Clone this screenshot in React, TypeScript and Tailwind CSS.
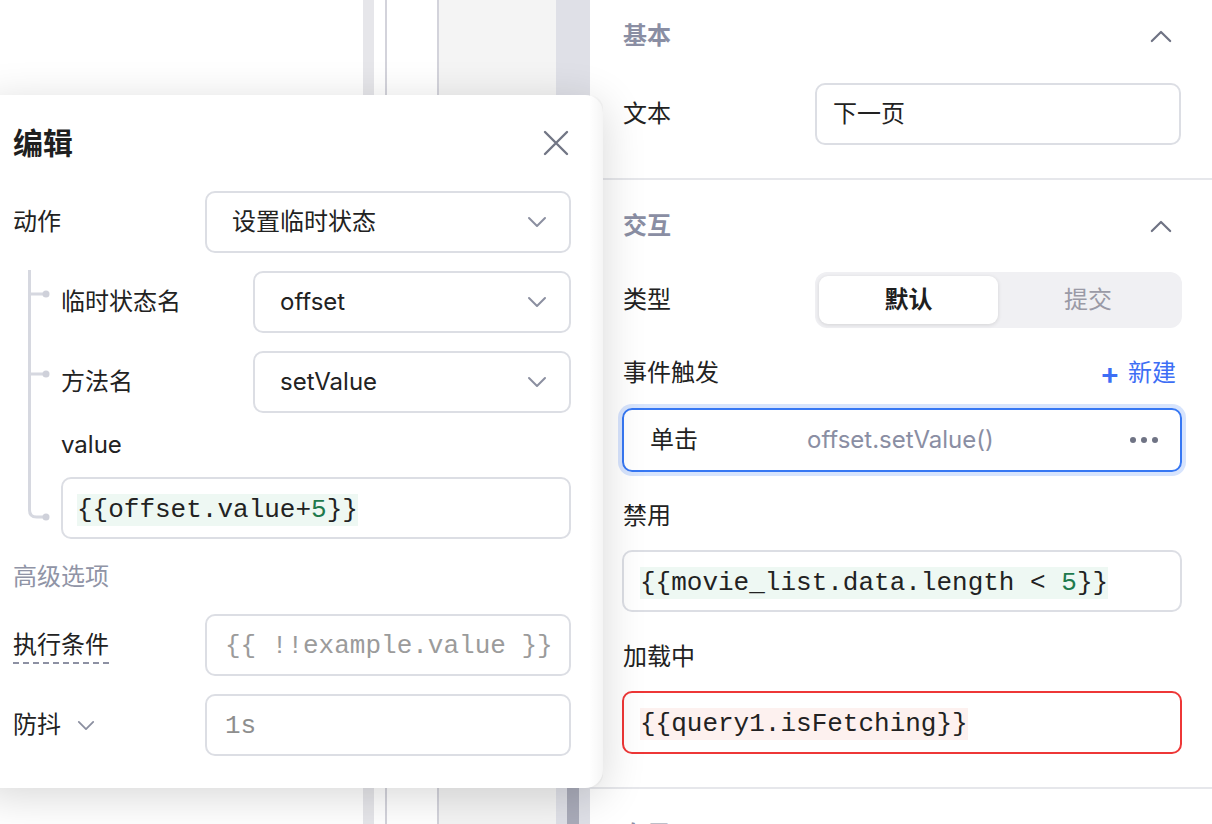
import React from 'react';

// Small drawn icons
const ChevronDown = ({ className }: { className?: string }) => (
  <svg viewBox="0 0 20 12" className={className} fill="none" stroke="currentColor" strokeWidth={2} strokeLinecap="round" strokeLinejoin="round">
    <path d="M2 2l8 8 8-8" />
  </svg>
);

const ChevronUp = ({ className }: { className?: string }) => (
  <svg viewBox="0 0 24 14" className={className} fill="none" stroke="currentColor" strokeWidth={2.4} strokeLinecap="round" strokeLinejoin="round">
    <path d="M2 12l10-10 10 10" />
  </svg>
);

const CloseIcon = () => (
  <svg viewBox="0 0 26 26" className="h-[26px] w-[26px] text-[#727685]" fill="none" stroke="currentColor" strokeWidth={2.4} strokeLinecap="round">
    <path d="M2 2l22 22M24 2L2 24" />
  </svg>
);

const Select = ({ value }: { value: string }) => (
  <div className="flex h-[62px] flex-1 items-center justify-between rounded-[10px] border-2 border-[#dcdee4] bg-white pl-[25px] pr-[22px]">
    <span className="text-[24px] text-[#222]">{value}</span>
    <ChevronDown className="h-[12px] w-[20px] text-[#8b8fa0]" />
  </div>
);

// Background canvas strips on the left
const Canvas = () => (
  <div className="flex h-full w-[590px] shrink-0">
    <div className="w-[363px] bg-white" />
    <div className="w-[11px] bg-[#e6e6ea]" />
    <div className="w-[11px] bg-white" />
    <div className="w-[2px] bg-[#d3d3db]" />
    <div className="w-[50px] bg-white" />
    <div className="w-[2px] bg-[#d3d3db]" />
    <div className="w-[117px] bg-[#f4f4f4]" />
    <div className="flex w-[34px] justify-center bg-[#dfe0e7]">
      <div className="mt-[600px] h-[224px] w-[12px] bg-[#a9abb9]" />
    </div>
  </div>
);

const EditPopup = () => (
  <div className="absolute left-[-20px] top-[95px] z-10 flex h-[693px] w-[623px] flex-col rounded-[18px] bg-white pl-[33px] pr-[32px] shadow-[0_8px_44px_rgba(0,0,0,0.16)]">
    <div className="pointer-events-none absolute bottom-0 right-0 top-0 w-[14px] rounded-r-[18px] bg-gradient-to-r from-transparent to-black/[0.04]" />

    <div className="flex h-[96px] shrink-0 items-center justify-between">
      <span className="text-[30px] font-bold text-[#1f1f1f]">编辑</span>
      <div className="mr-[2px]">
        <CloseIcon />
      </div>
    </div>

    <div className="flex h-[62px] shrink-0 items-center">
      <span className="w-[192px] text-[24px] text-[#222]">动作</span>
      <Select value="设置临时状态" />
    </div>

    {/* nested params with tree guide */}
    <div className="relative mt-[17px] flex h-[269px] shrink-0 flex-col pl-[48px] pt-[1px]">
      <svg className="absolute left-0 top-0 h-[269px] w-[48px]" viewBox="0 0 48 269" fill="none">
        <path d="M16.5 0V240Q16.5 247 23.5 247H31" stroke="#d6d8e0" strokeWidth={3} />
        <path d="M18 24H31M18 104H31" stroke="#d6d8e0" strokeWidth={3} />
        <circle cx="33" cy="24" r="3.5" fill="#cfd1da" />
        <circle cx="33" cy="104" r="3.5" fill="#cfd1da" />
        <circle cx="33" cy="247" r="3.5" fill="#cfd1da" />
      </svg>
      <div className="flex h-[62px] items-center">
        <span className="w-[192px] text-[24px] text-[#222]">临时状态名</span>
        <Select value="offset" />
      </div>
      <div className="mt-[18px] flex h-[62px] items-center">
        <span className="w-[192px] text-[24px] text-[#222]">方法名</span>
        <Select value="setValue" />
      </div>
      <div className="flex h-[64px] items-center text-[24px] text-[#222]">value</div>
      <div className="flex h-[62px] items-center rounded-[10px] border-2 border-[#dcdee4] px-[14px] pt-[3px]">
        <span className="bg-[#eef8f3] font-['Liberation_Mono',monospace] text-[26px] leading-[32px] text-[#222]">
          {'{{offset.value+'}
          <span className="text-[#1e7a4d]">5</span>
          {'}}'}
        </span>
      </div>
    </div>

    <div className="flex h-[75px] shrink-0 items-center text-[24px] text-[#9094a6]">高级选项</div>

    <div className="flex h-[62px] shrink-0 items-center">
      <div className="w-[192px]">
        <span className="border-b-2 border-dashed border-[#8d91a3] pb-[3px] text-[24px] text-[#222]">执行条件</span>
      </div>
      <div className="flex h-[62px] flex-1 items-center rounded-[10px] border-2 border-[#dcdee4] pl-[18px] pt-[3px]">
        <span className="font-['Liberation_Mono',monospace] text-[26px] text-[#9b9b9b]">{'{{ !!example.value }}'}</span>
      </div>
    </div>

    <div className="mt-[18px] flex h-[62px] shrink-0 items-center">
      <div className="flex w-[192px] items-center gap-[16px]">
        <span className="text-[24px] text-[#222]">防抖</span>
        <ChevronDown className="h-[11px] w-[18px] text-[#8b8fa0]" />
      </div>
      <div className="flex h-[62px] flex-1 items-center rounded-[10px] border-2 border-[#dcdee4] pl-[18px] pt-[3px]">
        <span className="font-['Liberation_Mono',monospace] text-[26px] text-[#8e8e8e]">1s</span>
      </div>
    </div>
  </div>
);

const SectionHeader = ({ title }: { title: string }) => (
  <div className="flex h-[92px] shrink-0 items-center justify-between pl-[33px] pr-[40px]">
    <span className="text-[24px] font-semibold text-[#8a8ea3]">{title}</span>
    <ChevronUp className="h-[13px] w-[22px] text-[#6f7384]" />
  </div>
);

const Inspector = () => (
  <div className="flex h-full w-[622px] shrink-0 flex-col bg-white">
    {/* 基本 */}
    <div className="shrink-0 border-b-2 border-[#e6e7eb] pb-[33px]">
      <div className="flex h-[72px] items-center justify-between pl-[33px] pr-[40px]">
        <span className="text-[24px] font-semibold text-[#8a8ea3]">基本</span>
        <ChevronUp className="h-[13px] w-[22px] text-[#6f7384]" />
      </div>
      <div className="mt-[11px] flex h-[62px] items-center pl-[33px] pr-[31px]">
        <span className="w-[192px] text-[24px] text-[#222]">文本</span>
        <div className="flex h-[62px] flex-1 items-center rounded-[10px] border-2 border-[#dcdee4] pl-[16px] text-[24px] text-[#222]">
          下一页
        </div>
      </div>
    </div>

    {/* 交互 */}
    <div className="shrink-0 border-b-2 border-[#e6e7eb] pb-[33px]">
      <SectionHeader title="交互" />
      <div className="flex flex-col pl-[32px] pr-[30px]">
        <div className="flex h-[56px] items-center pl-[1px]">
          <span className="w-[192px] text-[24px] text-[#222]">类型</span>
          <div className="flex h-[56px] flex-1 rounded-[12px] bg-[#f0f0f3] p-[4px]">
            <div className="flex w-[179px] items-center justify-center rounded-[9px] bg-white text-[24px] font-semibold text-[#1f1f1f] shadow-[0_1px_4px_rgba(0,0,0,0.12)]">
              默认
            </div>
            <div className="flex flex-1 items-center justify-center text-[24px] text-[#9a9aa6]">提交</div>
          </div>
        </div>

        <div className="mt-[28px] flex h-[34px] items-center justify-between pl-[1px]">
          <span className="text-[24px] text-[#222]">事件触发</span>
          <span className="mr-[6px] flex items-center gap-[8px] text-[24px] text-[#3d6ef5]">
            <span className="text-[30px] font-semibold leading-none">+</span>
            新建
          </span>
        </div>

        <div className="mt-[18px] flex h-[64px] items-center rounded-[10px] border-2 border-[#3677f3] pl-[26px] pr-[22px] ring-4 ring-[#d7e4fd]">
          <span className="w-[157px] text-[24px] text-[#222]">单击</span>
          <span className="flex-1 text-[24px] text-[#8a8ea3]">offset.setValue()</span>
          <div className="flex gap-[5px]">
            <span className="h-[6px] w-[6px] rounded-full bg-[#6f7384]" />
            <span className="h-[6px] w-[6px] rounded-full bg-[#6f7384]" />
            <span className="h-[6px] w-[6px] rounded-full bg-[#6f7384]" />
          </div>
        </div>

        <div className="mt-[27px] flex h-[34px] items-center pl-[1px] text-[24px] text-[#222]">禁用</div>
        <div className="mt-[17px] flex h-[62px] items-center rounded-[10px] border-2 border-[#dcdee4] px-[16px] pt-[3px]">
          <span className="bg-[#eef8f3] font-['Liberation_Mono',monospace] text-[26px] leading-[32px] text-[#222]">
            {'{{movie_list.data.length < '}
            <span className="text-[#1e7a4d]">5</span>
            {'}}'}
          </span>
        </div>

        <div className="mt-[28px] flex h-[34px] items-center pl-[1px] text-[24px] text-[#222]">加载中</div>
        <div className="mt-[17px] flex h-[63px] items-center rounded-[10px] border-2 border-[#ee3737] px-[16px] pt-[3px]">
          <span className="bg-[#fdf1ef] font-['Liberation_Mono',monospace] text-[26px] leading-[32px] text-[#222]">
            {'{{query1.isFetching}}'}
          </span>
        </div>
      </div>
    </div>

    {/* 布局 (cut off) */}
    <SectionHeader title="布局" />
  </div>
);

export default function App() {
  return (
    <div className="relative flex h-[824px] w-[1212px] overflow-hidden bg-white font-['Inter','Noto_Sans_CJK_SC',sans-serif]">
      <Canvas />
      <Inspector />
      <EditPopup />
    </div>
  );
}
